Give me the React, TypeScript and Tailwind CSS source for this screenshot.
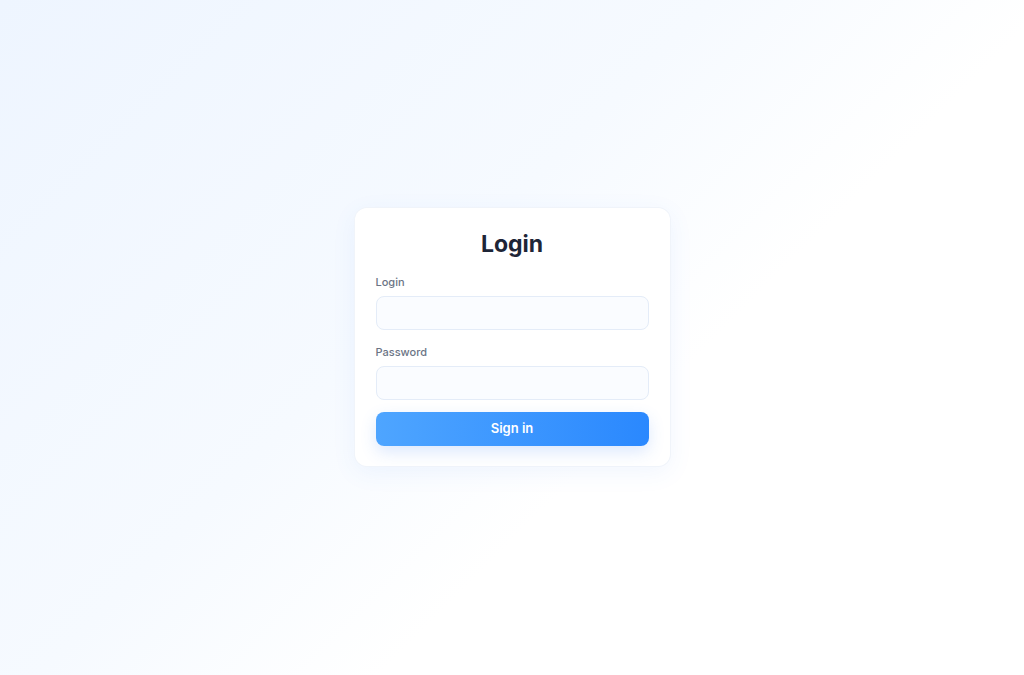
import React from "react";

export default function App() {
  return (
    <div className="flex min-h-screen items-center justify-center bg-[linear-gradient(135deg,#eef5ff_0%,#f6faff_42%,#ffffff_62%)] font-['Inter',sans-serif]">
      <form
        className="-mt-[1px] w-[315px] rounded-xl bg-white px-[21px] pt-[20px] pb-[20px] shadow-[0_6px_24px_rgba(59,130,246,0.08)] ring-1 ring-[#f0f4fa]"
        onSubmit={(e) => e.preventDefault()}
      >
        <h1 className="text-center text-[23px] leading-8 font-bold text-[#1e2537]">
          Login
        </h1>

        <label className="mt-[14px] block text-[11px] leading-4 font-medium text-[#6b7485]">
          Login
        </label>
        <input
          type="text"
          className="mt-[6px] block h-[34px] w-full rounded-lg border border-[#e4ecf8] bg-[#fafcff] px-3 text-sm outline-none"
        />

        <label className="mt-[14px] block text-[11px] leading-4 font-medium text-[#6b7485]">
          Password
        </label>
        <input
          type="password"
          className="mt-[6px] block h-[34px] w-full rounded-lg border border-[#e4ecf8] bg-[#fafcff] px-3 text-sm outline-none"
        />

        <button
          type="submit"
          className="mt-[12px] block h-[34px] w-full rounded-lg bg-gradient-to-r from-[#4ea5ff] to-[#2a88fe] text-[13px] font-semibold text-white shadow-[0_6px_16px_rgba(59,130,246,0.18)]"
        >
          Sign in
        </button>
      </form>
    </div>
  );
}
